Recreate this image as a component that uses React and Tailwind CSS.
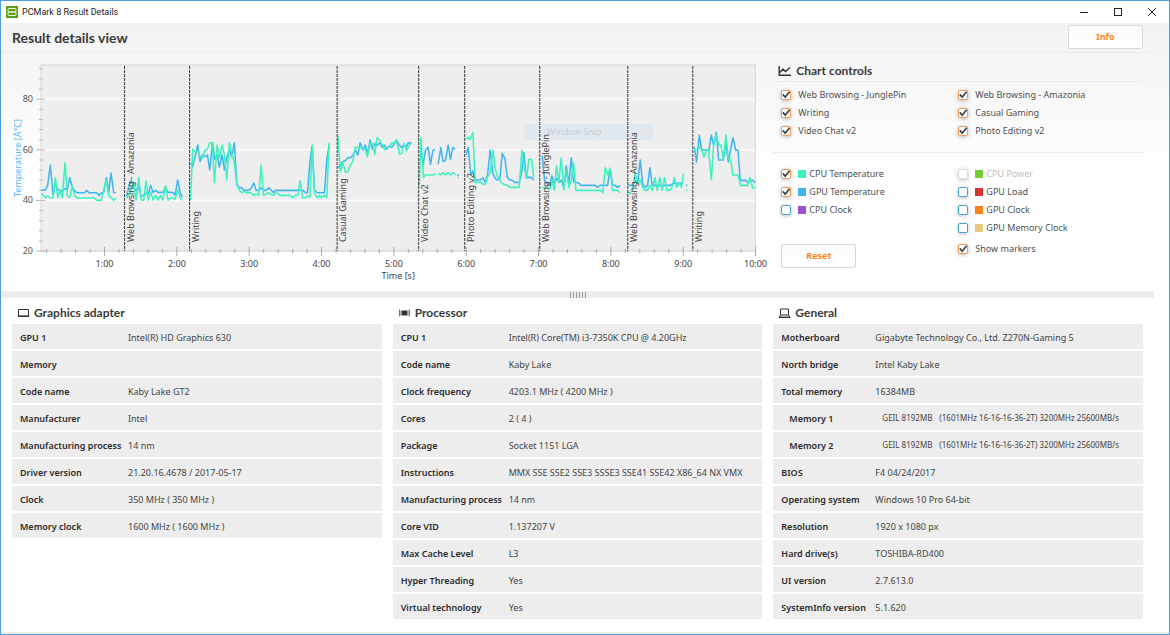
import React from "react";

const seriesColors = { gpu: "#41b4f2", cpu: "#3cf2be" };

// Each segment: plot origin offset and polylines sampled in thirds of a pixel.
const segments = [
  {
    dx: 0,
    gpu: ["124,390 136,390 143,376 151,315 159,405 166,370 173,390 180,390 187,395 195,385 202,390 209,353 217,380 224,393 231,398 253,398 260,391 267,398 290,398 297,406 304,399 311,396 319,353 326,395 333,339 341,398 347,398"],
    cpu: ["124,400 136,413 143,407 151,414 159,414 166,353 173,412 180,392 187,412 195,308 202,408 209,412 217,380 224,406 231,414 283,414 290,421 304,421 311,392 319,360 326,405 341,421 348,414"],
  },
  {
    dx: 0,
    gpu: ["380,408 387,375 393,360 399,378 407,392 415,380 423,407 430,407 437,400 445,400 452,376 459,397 467,391 474,397 489,397 496,382 503,397 518,397 525,405 533,360 540,396 547,412"],
    cpu: ["380,415 387,400 393,395 400,367 408,420 416,353 423,420 431,421 438,362 445,420 452,395 459,420 467,406 474,420 481,406 488,420 496,377 504,421 511,414 518,414 525,418 533,390 540,414 547,421"],
  },
  {
    dx: 180,
    gpu: ["31,310 38,320 45,290 53,255 60,305 67,285 75,290 82,285 89,330 97,248 104,298 111,285 118,321 126,285 133,330 140,293 148,270 155,290 163,248 170,375 177,382 185,383 192,391 207,391 214,383 221,369 228,391 236,391 243,383 250,391 258,391 266,383 273,390 280,397 287,391 368,391 375,397 382,398 389,310 396,258 403,390 411,398 433,398 440,300 447,255"],
    cpu: ["31,420 38,268 45,275 53,272 60,290 67,295 75,270 82,268 89,248 96,248 103,367 111,255 118,295 126,255 133,285 140,360 148,248 155,280 163,310 170,370 177,390 185,398 192,393 199,398 212,398 221,406 228,402 236,406 243,315 250,406 265,398 272,403 280,406 287,398 294,400 300,406 330,406 338,413 345,406 353,406 360,362 368,414 375,413 382,408 389,412 397,255 403,400 411,413 418,406 425,412 433,406 440,412 447,248"],
  },
  {
    dx: 180,
    gpu: ["473,322 480,318 487,305 495,303 503,293 512,292 519,285 526,270 533,285 540,248 548,270 555,255 563,278 570,240 577,268 585,250 592,255 599,248 606,262 613,255 620,268 628,258 635,262 642,252 649,240 657,255 664,262 672,255 679,260 685,248 694,250"],
    cpu: ["473,228 481,335 488,308 496,337 503,335 511,315 518,305 525,262 548,262 555,268 562,290 570,250 577,250 584,283 591,233 599,240 606,255 613,268 620,265 628,258 636,248 642,250 649,240 658,283 665,280 672,250 679,272 686,260 694,248"],
  },
  {
    dx: 370,
    gpu: ["152,270 159,313 166,270 174,262 181,313 188,272 195,268", "204,313 212,262 219,305 226,300 234,255 241,298 248,262 255,268", "263,343 263,348"],
    cpu: ["147,378 152,233 160,352 167,345 190,345 196,340", "204,340 211,345 218,338 226,345 233,338 241,345 248,338 256,345", "263,350 263,355"],
  },
  {
    dx: 370,
    gpu: ["287,285 294,262 302,345 308,333 315,360 330,360 338,353 345,367 352,345 360,270 368,340 375,355 382,360 389,358 396,280 404,295 411,350 418,360 425,360 433,367 447,367 454,340 461,278 468,352 483,352 491,360"],
    cpu: ["287,236 294,232 300,238 308,217 315,367 330,367 338,372 345,374 352,350 360,340 368,270 375,325 382,350 389,360 396,370 404,375 411,375 418,382 447,382 455,270 462,320 469,355 476,298 484,298 491,352"],
  },
  {
    dx: 370,
    gpu: ["516,287 523,360 531,372 538,375 545,347 552,372 560,355 567,367 574,360 581,385 588,318 596,370 603,293 610,365 618,368 625,368 633,376 675,376 682,382 690,376 712,376 720,325 727,375 735,376 742,382 750,376"],
    cpu: ["516,383 530,383 538,390 545,360 552,390 559,318 566,367 573,293 581,390 588,330 596,382 603,360 610,308 617,391 690,391 698,398 705,323 712,345 720,325 727,391 742,391 749,398"],
  },
  {
    dx: 560,
    gpu: ["203,376 218,376 225,360 232,370 240,300 247,370 255,382 262,376 269,323 276,376 330,376 340,370 360,370 368,367", "377,376 381,376"],
    cpu: ["203,398 210,398 218,380 225,340 232,372 240,360 247,382 255,391 262,390 269,376 276,391 284,353 291,391 299,353 306,391 313,353 320,391 328,391 335,382 342,353 349,382 356,368 363,382 370,340", "377,391 381,391"],
  },
  {
    dx: 560,
    gpu: ["402,262 409,306 417,225 424,270 446,270 453,225 460,255 468,217 475,300 489,300 497,248 504,306 511,268 518,233 526,270 533,270 540,361 555,361 562,368 570,361 578,361 585,368"],
    cpu: ["402,270 410,270 417,262 424,270 431,290 439,270 445,270 453,360 460,255 468,225 475,255 482,255 489,298 497,225 504,298 511,300 518,345 533,345 541,376 562,376 569,353 577,383 585,383"],
  },
];

const markers = [
  [124.5, "Web Browsing - Amazonia"],
  [189.5, "Writing"],
  [337, "Casual Gaming"],
  [418.5, "Video Chat v2"],
  [464.5, "Photo Editing v2"],
  [539.5, "Web Browsing - JunglePin"],
  [627.5, "Web Browsing - Amazonia"],
  [692.5, "Writing"],
];

const minutes = [1, 2, 3, 4, 5, 6, 7, 8, 9, 10];
const minorX = Array.from({ length: 50 }, (_, i) => i + 1).filter((i) => i % 5);
const levels = [80, 60, 40, 20];
const minorY = Array.from({ length: 18 }, (_, i) => i + 1).filter((i) => i % 5);

const timeX = (m) => 32.2 + m * 72.3;
const tempY = (t) => 301.6 - t * 2.53;

function TemperatureChart() {
  return (
    <svg viewBox="12 62 750 222" role="img" aria-label="Temperature over time" className="block w-full overflow-visible text-[9px]">
      <rect x="41" y="65" width="714" height="186" fill="#eeeeee" />
      {levels.slice(0, 3).map((t) => (
        <line key={t} x1="41" x2="755" y1={tempY(t)} y2={tempY(t)} stroke="#fafafa" strokeWidth="2" />
      ))}
      <path d="M41 251V65H755V251" fill="none" stroke="#d6d6d6" />
      <path d="M41 251H755" stroke="#cccccc" />
      {minorY.map((i) => (
        <line key={i} x1="39" x2="43" y1={251 - i * 10.12} y2={251 - i * 10.12} stroke="#bcbcbc" />
      ))}
      {levels.map((t) => (
        <g key={t}>
          <line x1="36" x2="45" y1={tempY(t)} y2={tempY(t)} stroke="#bcbcbc" />
          <text x="33" y={tempY(t) + 3} textAnchor="end" fill="#555">{t}</text>
        </g>
      ))}
      {minorX.map((i) => (
        <line key={i} x1={timeX(i / 5)} x2={timeX(i / 5)} y1="249" y2="253" stroke="#a8a8a8" />
      ))}
      {minutes.map((m) => (
        <g key={m}>
          <line x1={timeX(m)} x2={timeX(m)} y1="247" y2="256" stroke="#a8a8a8" />
          <text x={timeX(m)} y="267" textAnchor="middle" fill="#444">{m}:00</text>
        </g>
      ))}
      <text x="398" y="279" textAnchor="middle" fill="#444">Time [s]</text>
      <text transform="translate(21 158) rotate(-90)" textAnchor="middle" fill="#55b9f3">Temperature [Å°C]</text>

      <rect x="524" y="124" width="129" height="16" fill="#e1e8ee" />
      <text x="574" y="135" textAnchor="middle" fill="#c9d0d6">Window Snip</text>

      {["gpu", "cpu"].map((name) =>
        segments.map((s, i) => (
          <g key={name + i} transform={`translate(${s.dx} 60) scale(0.3333)`} fill="none" stroke={seriesColors[name]} strokeWidth="4.6" strokeLinejoin="round">
            {s[name].map((p) => <polyline key={p} points={p} />)}
          </g>
        ))
      )}
      {markers.map(([x, name]) => (
        <g key={x}>
          <line x1={x} x2={x} y1="66" y2="251" stroke="#333" strokeDasharray="3 1" />
          <text transform={`translate(${x + 9} 242) rotate(-90)`} fill="#444">{name}</text>
        </g>
      ))}
    </svg>
  );
}

function Check({ label, swatch, checked = false, disabled = false }) {
  return (
    <label className={`flex h-[18px] items-center ${disabled ? "text-[#bdbdbd]" : "text-[#505050]"}`}>
      <span className="mr-[7px] grid size-[10px] shrink-0">
        <input
          type="checkbox"
          defaultChecked={checked}
          disabled={disabled}
          className="peer col-start-1 row-start-1 size-[10px] appearance-none rounded-[2px] border border-[#3fa9bf] bg-white shadow-[0_1px_4px_rgba(0,0,0,0.25)] checked:border-[#f59a55] disabled:border-[#dcdcdc]"
        />
        <svg viewBox="0 0 10 10" className="pointer-events-none invisible col-start-1 row-start-1 size-[10px] peer-checked:visible" fill="none" stroke="#444" strokeWidth="1.8">
          <path d="M1.8 4.4L4.2 7.2L8.6 1.8" />
        </svg>
      </span>
      {swatch && <span className={`mr-[3px] size-2 shrink-0 ${swatch}`} />}
      {label}
    </label>
  );
}

function PanelTitle({ icon, children }) {
  return (
    <h2 className="flex h-6 items-center gap-1 pt-[2px] pl-[5px] font-[Lato,sans-serif] text-[12px] font-bold text-[#3a3a3a]">
      {icon}
      {children}
    </h2>
  );
}

const icons = {
  chart: (
    <svg viewBox="0 0 14 12" className="h-3 w-[14px]" fill="none" stroke="#333" strokeWidth="1.4">
      <path d="M1.2 1V10.3H13M2 7.5L5 4L7.5 6.5L12 2.5" />
    </svg>
  ),
  monitor: (
    <svg viewBox="0 0 13 12" className="h-3 w-[13px]" fill="none" stroke="#333">
      <path d="M1.5 2.5H11.5V9.5H1.5Z" />
      <path d="M1 9.2H12" strokeWidth="1.6" />
    </svg>
  ),
  chip: (
    <svg viewBox="0 0 13 12" className="h-3 w-[13px]" fill="#333">
      <rect x="3.5" y="3.5" width="6" height="5" />
      <path d="M1 2.5H2V9.5H1ZM11 2.5H12V9.5H11Z" fill="#777" />
      <path d="M2.3 3.5H3.2V8.5H2.3ZM9.8 3.5H10.7V8.5H9.8Z" fill="#999" />
    </svg>
  ),
  laptop: (
    <svg viewBox="0 0 13 12" className="h-3 w-[13px]" fill="none" stroke="#333">
      <path d="M2.5 2H10.5V8H2.5ZM2.5 8L1 10.5H12L10.5 8" />
      <path d="M1 10.3H12" strokeWidth="1.4" />
    </svg>
  ),
};

const panels = [
  {
    title: "Graphics adapter",
    icon: icons.monitor,
    labelWidth: "w-[116px]",
    rows: [
      ["GPU 1", "Intel(R) HD Graphics 630"],
      ["Memory", ""],
      ["Code name", "Kaby Lake GT2"],
      ["Manufacturer", "Intel"],
      ["Manufacturing process", "14 nm"],
      ["Driver version", "21.20.16.4678 / 2017-05-17"],
      ["Clock", "350 MHz ( 350 MHz )"],
      ["Memory clock", "1600 MHz ( 1600 MHz )"],
    ],
  },
  {
    title: "Processor",
    icon: icons.chip,
    labelWidth: "w-[116px]",
    rows: [
      ["CPU 1", "Intel(R) Core(TM) i3-7350K CPU @ 4.20GHz"],
      ["Code name", "Kaby Lake"],
      ["Clock frequency", "4203.1 MHz ( 4200 MHz )"],
      ["Cores", "2 ( 4 )"],
      ["Package", "Socket 1151 LGA"],
      ["Instructions", "MMX SSE SSE2 SSE3 SSSE3 SSE41 SSE42 X86_64 NX VMX"],
      ["Manufacturing process", "14 nm"],
      ["Core VID", "1.137207 V"],
      ["Max Cache Level", "L3"],
      ["Hyper Threading", "Yes"],
      ["Virtual technology", "Yes"],
    ],
  },
  {
    title: "General",
    icon: icons.laptop,
    labelWidth: "w-[102px]",
    rows: [
      ["Motherboard", "Gigabyte Technology Co., Ltd. Z270N-Gaming 5"],
      ["North bridge", "Intel Kaby Lake"],
      ["Total memory", "16384MB"],
      ["Memory 1", "GEIL 8192MB", "(1601MHz 16-16-16-36-2T) 3200MHz 25600MB/s"],
      ["Memory 2", "GEIL 8192MB", "(1601MHz 16-16-16-36-2T) 3200MHz 25600MB/s"],
      ["BIOS", "F4 04/24/2017"],
      ["Operating system", "Windows 10 Pro 64-bit"],
      ["Resolution", "1920 x 1080 px"],
      ["Hard drive(s)", "TOSHIBA-RD400"],
      ["UI version", "2.7.613.0"],
      ["SystemInfo version", "5.1.620"],
    ],
  },
];

function Panel({ title, icon, labelWidth, rows }) {
  return (
    <section>
      <PanelTitle icon={icon}>{title}</PanelTitle>
      <table className="w-full table-fixed border-separate border-spacing-0 text-left">
        <tbody>
          {rows.map(([label, value, detail]) => (
            <tr key={label} className="h-[27px] bg-[#ededed]">
              <th scope="row" className={`${labelWidth} border-b-2 border-white pt-[2px] pr-0 pb-0 font-semibold whitespace-nowrap text-[#2b2b2b] ${detail ? "pl-4" : "pl-2"}`}>{label}</th>
              <td className={`border-b-2 border-white pr-0 pb-0 text-[#444] ${detail ? "pt-0 pl-[7px] text-[8px]" : "pt-[2px] pl-0"}`}>
                {value}
                {detail && <span className="ml-[7px]">{detail}</span>}
              </td>
            </tr>
          ))}
        </tbody>
      </table>
    </section>
  );
}

const buttonClass = "h-6 w-[75px] rounded-[2px] border border-[#d9d9d9] bg-linear-to-b from-[#fafafa] to-white text-[9px] font-bold text-[#ff851f]";

export default function App() {
  return (
    <div className="flex min-h-screen flex-col border border-[#4f9fe0] bg-white font-['Noto_Sans','Open_Sans',sans-serif] text-[9px] leading-3">
      <header className="flex h-[22px] items-center bg-white pl-[5px] font-[Roboto,sans-serif] text-[#222]">
        <svg viewBox="0 0 12 12" className="mr-1 size-3">
          <rect width="12" height="12" fill="#5d9c14" />
          <path d="M3 2.5H9Q10 2.5 10 3.5V5Q10 6 9 6H3Q2 6 2 5V3.5Q2 2.5 3 2.5ZM3 6H9Q10 6 10 7V8.5Q10 9.5 9 9.5H3Q2 9.5 2 8.5V7Q2 6 3 6Z" fill="none" stroke="#eef8dd" />
        </svg>
        <span className="flex-1">PCMark 8 Result Details</span>
        <button aria-label="Minimize" className="grid h-full w-[34px] place-items-center">
          <svg viewBox="0 0 10 10" className="size-[10px]" stroke="#222"><path d="M1 5.5H9" /></svg>
        </button>
        <button aria-label="Maximize" className="grid h-full w-[34px] place-items-center">
          <svg viewBox="0 0 10 10" className="size-[10px]" stroke="#222" fill="none"><rect x="1.5" y="1.5" width="7" height="7" /></svg>
        </button>
        <button aria-label="Close" className="grid h-full w-[34px] place-items-center">
          <svg viewBox="0 0 10 10" className="size-[10px]" stroke="#222"><path d="M1.2 1.2L8.8 8.8M8.8 1.2L1.2 8.8" /></svg>
        </button>
      </header>

      <div className="flex flex-1 flex-col bg-[linear-gradient(to_bottom,#f2f2f2_0px,#f5f5f5_32px,#ffffff_160px)]">
        <div className="mr-[15px] flex h-[30px] items-start justify-between border-b border-[#ebebeb] px-[11px] pt-[2px]">
          <h1 className="font-[Lato,sans-serif] text-[14px] leading-[26px] font-bold text-[#3a3a3a]">Result details view</h1>
          <button className={buttonClass}>Info</button>
        </div>

        <main className="flex flex-1 flex-col">
          <div className="grid h-[238px] grid-cols-3 gap-x-[11px] pt-[9px] pr-[26px] pl-[11px]">
            <div className="col-span-2">
              <TemperatureChart />
            </div>
            <section>
              <h2 className="flex h-5 items-center gap-1 border-b border-[#ebebeb] pb-px pl-[5px] font-[Lato,sans-serif] text-[12px] font-bold text-[#3a3a3a]">
                {icons.chart}
                Chart controls
              </h2>
              <div className="grid grid-cols-[177px_1fr] border-b border-[#ebebeb] pt-1 pb-3 pl-2">
                <Check label="Web Browsing - JunglePin" checked />
                <Check label="Web Browsing - Amazonia" checked />
                <Check label="Writing" checked />
                <Check label="Casual Gaming" checked />
                <Check label="Video Chat v2" checked />
                <Check label="Photo Editing v2" checked />
              </div>
              <div className="grid grid-cols-[177px_1fr] pt-3 pl-2">
                <div className="flex flex-col">
                  <Check label="CPU Temperature" swatch="bg-[#3cf2be]" checked />
                  <Check label="GPU Temperature" swatch="bg-[#41b4f2]" checked />
                  <Check label="CPU Clock" swatch="bg-[#9553cf]" />
                  <button className={`${buttonClass} mt-[25px]`}>Reset</button>
                </div>
                <div className="flex flex-col">
                  <Check label="CPU Power" swatch="bg-[#76cc33]" disabled />
                  <Check label="GPU Load" swatch="bg-[#d83434]" />
                  <Check label="GPU Clock" swatch="bg-[#ff8119]" />
                  <Check label="GPU Memory Clock" swatch="bg-[#e8ca7d]" />
                  <div className="pt-[3px]">
                    <Check label="Show markers" checked />
                  </div>
                </div>
              </div>
            </section>
          </div>

          <div role="separator" className="mr-[15px] flex h-[7px] items-center justify-center gap-[2px] bg-[#ececec]">
            {[0, 1, 2, 3, 4, 5].map((i) => (
              <span key={i} className="h-[6px] w-px bg-[#8f9aa3]" />
            ))}
          </div>

          <div className="grid flex-1 grid-cols-3 gap-x-[11px] border-b-2 border-[#ececec] pt-[2px] pr-[26px] pb-[10px] pl-[11px]">
            {panels.map((p) => (
              <Panel key={p.title} {...p} />
            ))}
          </div>
        </main>
      </div>
    </div>
  );
}
